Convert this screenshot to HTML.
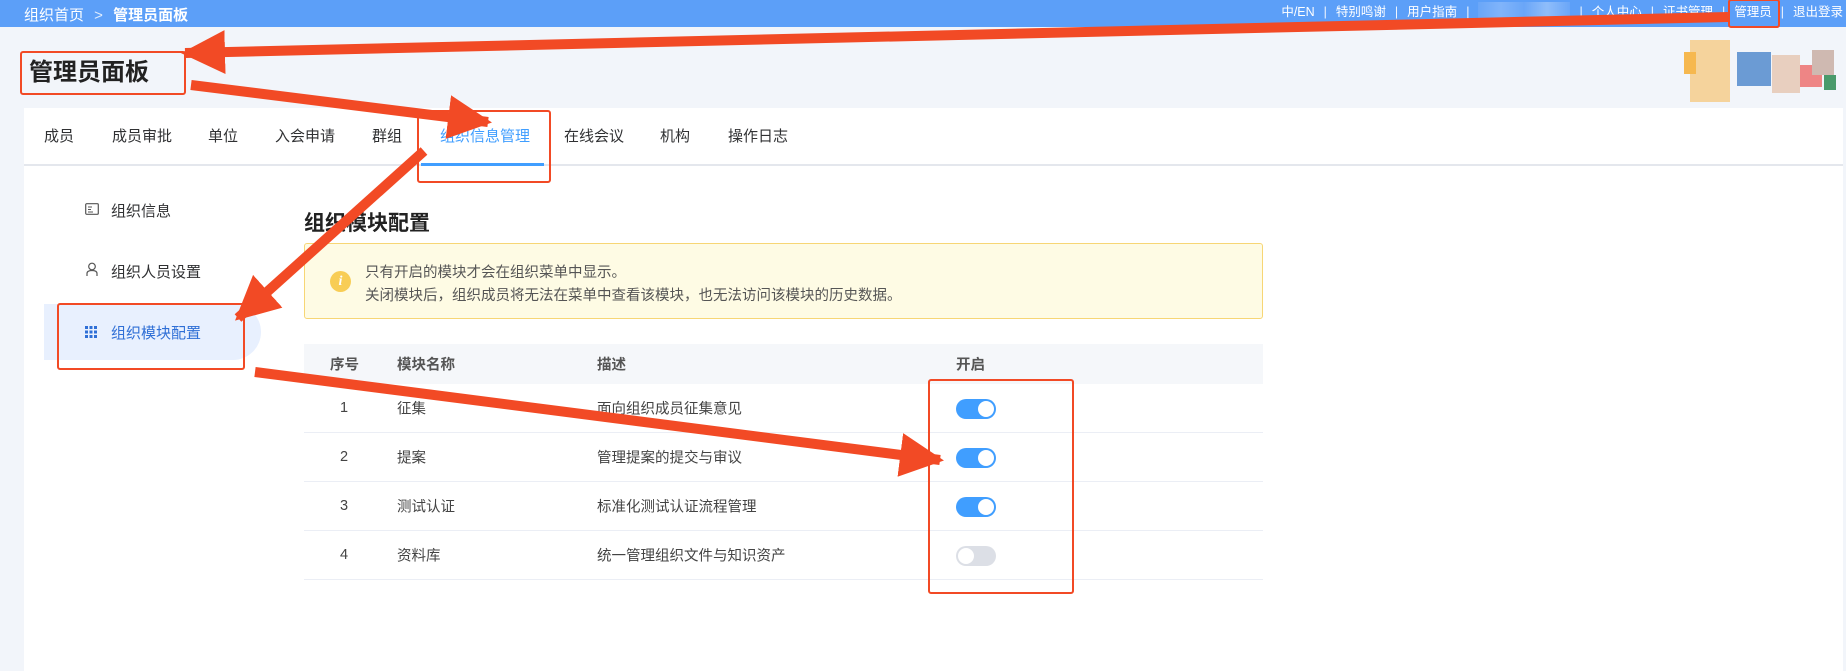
<!DOCTYPE html>
<html><head><meta charset="utf-8"><style>
*{margin:0;padding:0;box-sizing:border-box}
body{width:1846px;height:671px;overflow:hidden;background:#f2f5fa;font-family:"Liberation Sans","Noto Sans CJK SC",sans-serif;position:relative;color:#303133}
.top{position:absolute;left:0;top:0;width:1846px;height:27px;background:#5c9ff8;color:#fff;font-size:14px}
.bc{position:absolute;left:24px;top:4px;font-size:15px}
.bc b{font-weight:bold}
.nav{position:absolute;right:3px;top:2px;display:flex;align-items:center;font-size:12.5px;line-height:18px;white-space:nowrap}
.nav span.s{margin:0 9px;opacity:.9}
.blur{display:inline-block;width:92px;height:20px;background:linear-gradient(90deg,#6aa6f8,#80b4fa,#6aa6f8,#8fbdfa,#6aa6f8)}
.title{position:absolute;left:29px;top:52px;font-size:24px;font-weight:bold;color:#222}
.card{position:absolute;left:24px;top:108px;width:1819px;height:563px;background:#fff}
.tabs{position:absolute;left:0;top:0;width:100%;height:58px;border-bottom:2px solid #e4e7ed}
.tab{position:absolute;top:17px;font-size:15px;color:#303133}
.tab.a{color:#409eff}
.ul{position:absolute;left:397px;top:55px;width:123px;height:3px;background:#409eff}
.side{position:absolute;font-size:15px;color:#303133}
.act{position:absolute;left:20px;top:196px;width:217px;height:56px;background:#e8f0fe;border-radius:0 28px 28px 0}
.h2{position:absolute;left:280px;top:99px;font-size:21px;font-weight:bold;color:#222}
.note{position:absolute;left:280px;top:135px;width:959px;height:76px;background:#fefbe4;border:1px solid #f7d675;border-radius:3px;font-size:14.5px;color:#555}
.ic{position:absolute;left:25px;top:27px;width:21px;height:21px;border-radius:50%;background:#f8cd55;color:#fff;font-style:italic;font-size:14px;text-align:center;line-height:21px;font-family:"Liberation Serif",serif;font-weight:bold}
.tbl{position:absolute;left:280px;top:236px;width:959px}
.hd{height:40px;background:#f5f7fa;font-size:14.5px;font-weight:bold;color:#555;position:relative}
.row{height:49px;border-bottom:1px solid #ebeef5;position:relative;font-size:14.5px;color:#444}
.c{position:absolute;top:50%;transform:translateY(-50%);white-space:nowrap}
.sw{position:absolute;left:652px;top:15px;width:40px;height:20px;border-radius:10px;background:#409eff}
.sw:after{content:"";position:absolute;right:2px;top:2px;width:16px;height:16px;border-radius:50%;background:#fff}
.sw.off{background:#dcdfe6}
.sw.off:after{right:auto;left:2px}
.px{position:absolute}
</style></head><body>
<div class="top">
<div class="bc">组织首页 <span style="margin:0 6px;opacity:.8">&gt;</span> <b>管理员面板</b></div>
<div class="nav">中/EN<span class="s">|</span>特别鸣谢<span class="s">|</span>用户指南<span class="s">|</span><span class="blur"></span><span class="s">|</span>个人中心<span class="s">|</span>证书管理<span class="s">|</span>管理员<span class="s">|</span>退出登录</div>
</div>
<div class="title">管理员面板</div>
<div class="px" style="left:1690px;top:40px;width:40px;height:62px;background:#f5d39c"></div>
<div class="px" style="left:1684px;top:52px;width:12px;height:22px;background:#f6b84f"></div>
<div class="px" style="left:1737px;top:52px;width:34px;height:34px;background:#6b9bd4"></div>
<div class="px" style="left:1772px;top:55px;width:28px;height:38px;background:#e8cfbf"></div>
<div class="px" style="left:1800px;top:65px;width:22px;height:22px;background:#ee8585"></div>
<div class="px" style="left:1812px;top:50px;width:22px;height:25px;background:#cfb9b1"></div>
<div class="px" style="left:1824px;top:75px;width:12px;height:15px;background:#4a9a6b"></div>
<div class="card">
<div class="tabs">
<span class="tab" style="left:20px">成员</span>
<span class="tab" style="left:88px">成员审批</span>
<span class="tab" style="left:184px">单位</span>
<span class="tab" style="left:251px">入会申请</span>
<span class="tab" style="left:348px">群组</span>
<span class="tab a" style="left:416px">组织信息管理</span>
<span class="tab" style="left:540px">在线会议</span>
<span class="tab" style="left:636px">机构</span>
<span class="tab" style="left:704px">操作日志</span>
<div class="ul"></div>
</div>
<div class="act"></div>
<svg class="px" style="left:61px;top:95px" width="14" height="12" viewBox="0 0 14 12"><rect x=".7" y=".7" width="12.6" height="10.6" rx="1" fill="none" stroke="#555" stroke-width="1.2"/><path d="M3 4h4M3 6.5h3M3 9h5" stroke="#555" stroke-width="1"/></svg>
<span class="side" style="left:87px;top:92px">组织信息</span>
<svg class="px" style="left:62px;top:154px" width="12" height="15" viewBox="0 0 12 15"><circle cx="6" cy="4.5" r="3.3" fill="none" stroke="#555" stroke-width="1.2"/><path d="M1 14v-2.5q0-3 5-3t5 3V14" fill="none" stroke="#555" stroke-width="1.2"/></svg>
<span class="side" style="left:87px;top:153px">组织人员设置</span>
<svg class="px" style="left:61px;top:218px" width="12" height="12" viewBox="0 0 12 12" fill="#2f6fd6"><rect x="0" y="0" width="3" height="3"/><rect x="4.5" y="0" width="3" height="3"/><rect x="9" y="0" width="3" height="3"/><rect x="0" y="4.5" width="3" height="3"/><rect x="4.5" y="4.5" width="3" height="3"/><rect x="9" y="4.5" width="3" height="3"/><rect x="0" y="9" width="3" height="3"/><rect x="4.5" y="9" width="3" height="3"/><rect x="9" y="9" width="3" height="3"/></svg>
<span class="side" style="left:87px;top:214px;color:#2f6fd6">组织模块配置</span>
<div class="h2">组织模块配置</div>
<div class="note"><div class="ic">i</div>
<div style="position:absolute;left:60px;top:17px">只有开启的模块才会在组织菜单中显示。</div>
<div style="position:absolute;left:60px;top:40px">关闭模块后，组织成员将无法在菜单中查看该模块，也无法访问该模块的历史数据。</div></div>
<div class="tbl">
<div class="hd"><span class="c" style="left:26px">序号</span><span class="c" style="left:93px">模块名称</span><span class="c" style="left:293px">描述</span><span class="c" style="left:652px">开启</span></div>
<div class="row"><span class="c" style="left:36px">1</span><span class="c" style="left:93px">征集</span><span class="c" style="left:293px">面向组织成员征集意见</span><div class="sw"></div></div>
<div class="row"><span class="c" style="left:36px">2</span><span class="c" style="left:93px">提案</span><span class="c" style="left:293px">管理提案的提交与审议</span><div class="sw"></div></div>
<div class="row"><span class="c" style="left:36px">3</span><span class="c" style="left:93px">测试认证</span><span class="c" style="left:293px">标准化测试认证流程管理</span><div class="sw"></div></div>
<div class="row"><span class="c" style="left:36px">4</span><span class="c" style="left:93px">资料库</span><span class="c" style="left:293px">统一管理组织文件与知识资产</span><div class="sw off"></div></div>
</div>
</div>
<svg class="px" style="left:0;top:0" width="1846" height="671">
<defs><marker id="m" markerUnits="userSpaceOnUse" markerWidth="44" markerHeight="44" refX="40" refY="22" orient="auto"><path d="M0 0L44 22L0 44z" fill="#f24a25"/></marker></defs>
<g fill="none" stroke="#f24a25" stroke-width="2">
<rect x="21" y="52" width="164" height="42" rx="2"/>
<rect x="418" y="111" width="132" height="71" rx="2"/>
<rect x="58" y="304" width="186" height="65" rx="2"/>
<rect x="929" y="380" width="144" height="213" rx="2"/>
<rect x="1729" y="0" width="50" height="27" rx="2"/>
</g>
<g stroke="#f24a25" stroke-width="10" marker-end="url(#m)">
<line x1="1728" y1="17" x2="185" y2="53"/>
<line x1="191" y1="85" x2="488" y2="122"/>
<line x1="424" y1="151" x2="238" y2="318"/>
<line x1="255" y1="372" x2="940" y2="460"/>
</g>
</svg>
</body></html>
